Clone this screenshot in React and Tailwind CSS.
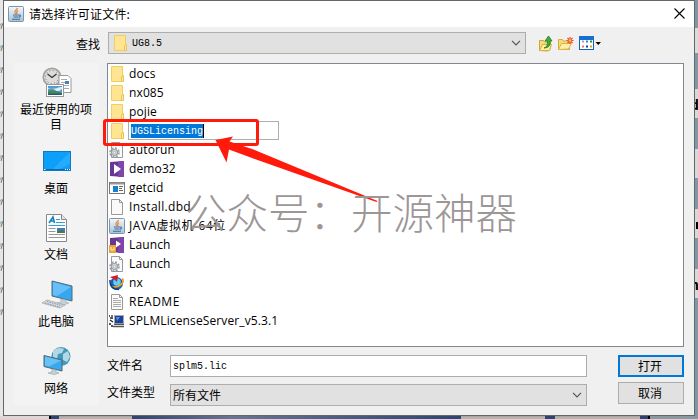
const CJK = "font-['Noto_Sans_CJK_SC','Noto_Sans',sans-serif]";
const MONO = "font-['Liberation_Mono',monospace]";

function Folder() {
  return (
    <svg width="16" height="18" viewBox="0 0 16 18" className="shrink-0">
      <path d="M2.500 1.500h11v9h1v6h-12z" fill="#ffe592" stroke="#f0cf60" />
      <path d="M12.500 16.500v-5l2-1v6z" fill="#ffe9a2" stroke="#eac54f" />
    </svg>
  );
}

function Java() {
  return (
    <svg width="16" height="16" viewBox="0 0 16 16" className="shrink-0">
      <defs>
        <linearGradient id="jv" x1="0" y1="0" x2="0" y2="1">
          <stop offset="0" stopColor="#f4f7fa" />
          <stop offset="1" stopColor="#a9c0d4" />
        </linearGradient>
      </defs>
      <rect x=".5" y=".5" width="15" height="15" rx="1" fill="url(#jv)" stroke="#7897b2" />
      <path d="M9.500 2C9 4 6 4.500 7 6.500L8 8M10 4.500C8 5.500 8.500 6.500 9 8" fill="none" stroke="#e88432" strokeWidth="1.200" />
      <path d="M5 9h6M5.500 11h5M4 13.300h8M11 9q3 0 0 2.500" fill="none" stroke="#416c9a" strokeWidth="1.100" />
    </svg>
  );
}

function Page({ gear, lines }) {
  return (
    <svg width="16" height="18" viewBox="0 0 16 18" className="shrink-0">
      <path d="M2.500 1.500h8l3 3v12h-11z" fill="#fafafa" stroke="#999" />
      <path d="M10.500 1.500v3h3" fill="none" stroke="#999" />
      {lines && <path d="M4 5.500h5M4 7.500h8M4 9.500h8M4 11.500h8M4 13.500h8" stroke="#aaa" />}
      {gear && (
        <g>
          <circle cx="5.500" cy="11.500" r="4.300" fill="none" stroke="#98a0a6" strokeWidth="2" strokeDasharray="1.900 1.470" />
          <circle cx="5.500" cy="11.500" r="3" fill="#dfe3e6" stroke="#98a0a6" strokeWidth="1.200" />
          <circle cx="5.500" cy="11.500" r="1.200" fill="#fff" stroke="#98a0a6" strokeWidth=".8" />
        </g>
      )}
    </svg>
  );
}

function Play({ lock }) {
  return (
    <svg width="16" height="16" viewBox="0 0 16 16" className="shrink-0">
      <path d="M1 1l14-1v16L1 15z" fill="#6b3594" />
      <path d="M9 .5l6-.5v16H9z" fill="#7f46aa" />
      <path d={lock ? "M7 3.500l5 3.500-5 3.500z" : "M5 3l7 5-7 5z"} fill="#fff" />
      {lock && (
        <g>
          <rect x="0" y="8" width="7" height="8" fill="#e9a536" />
          <path d="M2 10v3h3v-3" fill="none" stroke="#fff0c0" />
        </g>
      )}
    </svg>
  );
}

function AppWindow() {
  return (
    <svg width="16" height="14" viewBox="0 0 16 14" className="shrink-0">
      <rect x=".5" y="1.500" width="15" height="11" fill="#fff" stroke="#777" />
      <path d="M1 2.500h14" stroke="#999" strokeWidth="2" />
      <rect x="4" y="5" width="5" height="6" fill="#1582cf" />
      <path d="M10 5.500h4M10 7.500h3M10 9.500h4" stroke="#666" />
    </svg>
  );
}

function Nx() {
  return (
    <svg width="16" height="16" viewBox="0 0 16 16" className="shrink-0">
      <circle cx="7.500" cy="8.500" r="6.500" fill="#1b62b4" />
      <circle cx="8" cy="7" r="3.800" fill="#5ed0f5" />
      <path d="M13 3.500c4 3-2 9-10 8.500" fill="none" stroke="#f0a31c" strokeWidth="1.600" />
      <path d="M1 5c-.5 6 3 9.500 9 9.500" fill="none" stroke="#173c82" strokeWidth="1.500" />
      <path d="M1 2l8-2-1 7-2.500-2.500z" fill="#d51a28" />
    </svg>
  );
}

function Setup() {
  return (
    <svg width="16" height="14" viewBox="0 0 16 14" className="shrink-0">
      <rect x="5.500" y="1.500" width="9" height="8" fill="#1d3f9e" stroke="#aaa" />
      <path d="M7 3h4l-3 4z" fill="#4f93df" />
      <path d="M5 10.500h10M4 12.500h11" stroke="#555" strokeWidth="1.500" />
      <path d="M5 11.500h10" stroke="#ddd" strokeWidth=".8" />
      <path d="M0 2h1M3 1v2M1 4h3M1 6l3 2M0 10h2M2 12h2" stroke="#222" strokeWidth="1.300" />
    </svg>
  );
}

function Recent() {
  return (
    <svg width="30" height="32" viewBox="0 0 30 32">
      <circle cx="10" cy="10" r="8.700" fill="#dcdcda" stroke="#a2a29f" strokeWidth="1.800" />
      <circle cx="10" cy="10" r="6.500" fill="none" stroke="#777" strokeDasharray="1 2.400" />
      <path d="M5.500 7l4.500 3.500 4.500-3.500" fill="none" stroke="#333" strokeWidth="1.200" />
      <path d="M17 8.500h9l3 3v14H17z" fill="#fff" stroke="#999" />
      <path d="M19 12.500h6M19 15.500h4M19 18.500h8M19 21.500h8" stroke="#aaa" />
      <rect x="23" y="14" width="4" height="3" fill="#4384ba" />
      <rect x="4.500" y="17.500" width="17" height="12" fill="#fff" stroke="#999" />
      <rect x="6" y="19" width="14" height="9" fill="#539cce" />
      <path d="M6 22q4-2 7 1t7-1v-2q-3 0-5 1t-9 0z" fill="#d9edf5" />
      <path d="M6 24q6-2 14 2v2H6z" fill="#4d8650" />
      <path d="M6 26.500h14v1.500H6z" fill="#255b80" />
    </svg>
  );
}

function Desktop() {
  return (
    <svg width="30" height="32" viewBox="0 3 30 32">
      <rect x="1.500" y="8.500" width="27" height="19" fill="#0da0fb" stroke="#1279bd" />
      <path d="M28 9v12L16 27H10z" fill="#25abff" />
      <path d="M2 26.500h26" stroke="#0969aa" />
      <path d="M2 26.500h1.500M23 26.500h1M25 26.500h1M27 26.500h1" stroke="#fff" />
    </svg>
  );
}

function Document() {
  return (
    <svg width="30" height="32" viewBox="0 0 30 32">
      <path d="M4.500 2.500h15l5 5v22h-20z" fill="#fdfdfd" stroke="#888" />
      <path d="M19.500 2.500v5h5" fill="#e5e5e5" stroke="#888" />
      <path d="M7 11l4-6 1.500 6M8.500 9h4" fill="none" stroke="#1683bf" strokeWidth="1.600" />
      <path d="M14 7.500h4M14 10.500h9M6.500 13.500h16.500" stroke="#39a0d6" />
      <path d="M6.500 16.500h7M6.500 19.500h7M6.500 22.500h16.500M6.500 25.500h16.500" stroke="#999" />
      <rect x="15" y="16" width="8" height="5" fill="#437eaf" />
      <path d="M15 21v-2l5-1 3 2v1z" fill="#4d7753" />
    </svg>
  );
}

function Computer() {
  return (
    <svg width="32" height="32" viewBox="0 0 32 32">
      <path d="M11 2l20 5v15l-20-5z" fill="#35a6f0" stroke="#52697b" />
      <path d="M12 3l18 5-14 9-4-1z" fill="#65bff8" />
      <path d="M20 20v3l-4 1 7 2 5-2-3-1v-2z" fill="#c6d0d6" stroke="#9eacb4" strokeWidth=".6" />
      <path d="M1 24l5-3 18 5-5 3z" fill="#d5dadd" stroke="#9aa4aa" strokeWidth=".7" />
      <path d="M4 24l15 4M6 22.500l15 4" stroke="#929da5" strokeDasharray="1.500 1" />
    </svg>
  );
}

function Network() {
  return (
    <svg width="30" height="32" viewBox="0 1 30 32">
      <circle cx="19" cy="11.500" r="9.500" fill="#4797b9" />
      <path d="M11 6q5-5 11-2l-2 4-4 1-1 5-4-2zM21 9l5-3 2 6-3 5-4-2z" fill="#b1d8e5" />
      <path d="M2 10.500l18 4.500v11L2 21.500z" fill="#39a9ef" stroke="#4e6473" />
      <path d="M3 11.500l16 4-12 6-4-1z" fill="#69c1f5" />
      <path d="M10 24v3l-4 1 6 1.500 5-1.500-3-1v-2z" fill="#c5d0d5" stroke="#94a2aa" strokeWidth=".6" />
    </svg>
  );
}

function Chevron() {
  return (
    <svg width="10" height="6" viewBox="0 0 10 6">
      <path d="M1 .8l4 4 4-4" fill="none" stroke="#555" strokeWidth="1.200" />
    </svg>
  );
}

function UpFolder() {
  return (
    <svg width="14" height="17" viewBox="0 0 14 17">
      <path d="M.5 15.500v-10h4l1 1.500h6v7l-3 2z" fill="#f5dc7a" stroke="#cda637" />
      <path d="M.5 15.500l3-6h9l-2 6z" fill="#ffefa0" stroke="#d5b044" />
      <path d="M5 13q4-1 3.500-7H6L9.500 1 13 6h-2q1 7-6 7z" fill="#3faf3c" stroke="#1c7a22" strokeWidth=".8" />
    </svg>
  );
}

function NewFolder() {
  return (
    <svg width="16" height="15" viewBox="0 0 16 15">
      <path d="M.5 13.500v-10h4l1 1.500h6v8.500z" fill="#f5dc7a" stroke="#d5ad3c" />
      <path d="M.5 13.500l3-6h10l-3 5.500z" fill="#ffefac" stroke="#dbb54c" />
      <path d="M12 1v7M8.500 4.500h7M9.500 2l5 5M14.500 2l-5 5" stroke="#f04e25" strokeWidth="1.200" />
      <circle cx="12" cy="4.500" r="1.200" fill="#ffc36b" />
    </svg>
  );
}

function ViewMenu() {
  return (
    <svg width="23" height="15" viewBox="0 0 23 15">
      <rect x=".5" y=".5" width="14" height="13" fill="#fff" stroke="#0f62bd" />
      <path d="M0 2h15" stroke="#1570d0" strokeWidth="4" />
      <path d="M3 5.500h2" stroke="#aaa0c8" strokeWidth="2" />
      <path d="M7 5.500h2" stroke="#2683d6" strokeWidth="2" />
      <path d="M11 5.500h2" stroke="#289328" strokeWidth="2" />
      <path d="M3 10.500h2" stroke="#f0775c" strokeWidth="2" />
      <path d="M7 10.500h2" stroke="#17389a" strokeWidth="2" />
      <path d="M11 10.500h2" stroke="#d7a421" strokeWidth="2" />
      <path d="M16.500 6h5.500l-2.750 3z" fill="#000" />
    </svg>
  );
}

const files = [
  ["docs", <Folder />],
  ["nx085", <Folder />],
  ["pojie", <Folder />],
  ["UGSLicensing", <Folder />],
  ["autorun", <Page gear />],
  ["demo32", <Play />],
  ["getcid", <AppWindow />],
  ["Install.dbd", <Page />, "tracking-[0.3px]"],
  ["JAVA虚拟机-64位", <Java />, "tracking-[0.5px]"],
  ["Launch", <Play lock />],
  ["Launch", <Page gear />],
  ["nx", <Nx />],
  ["README", <Page lines />, "tracking-[0.5px]"],
  ["SPLMLicenseServer_v5.3.1", <Setup />],
];

const places = [
  ["最近使用的项目", <Recent />, "h-[80px]"],
  ["桌面", <Desktop />, "h-[67px]"],
  ["文档", <Document />, "h-[68px]"],
  ["此电脑", <Computer />, "h-[67px]"],
  ["网络", <Network />, "h-[60px]"],
];

function Backdrop() {
  return (
    <div className="flex w-[3px] shrink-0 flex-col overflow-hidden bg-[#8098a4]">
      <div className="h-[28px]" />
      <div className="h-[25px] bg-[#d9dcdd]" />
      <div className="h-[36px]" />
      <div className="h-[29px] bg-[#d8d8d8] pt-[7px]">
        <div className="-ml-[5px] text-[14px] leading-[16px] font-bold">d</div>
      </div>
      <div className="h-[31px]" />
      <div className="h-[29px] bg-[#d8d8d8]" />
      <div className="h-[31px]" />
      <div className="h-[29px] bg-[#d8d8d8] pt-[13px]">
        <div className="ml-px h-[7px] bg-black" />
      </div>
      <div className="h-[31px]" />
      <div className="h-[29px] bg-[#d8d8d8] pt-[7px]">
        <div className="-ml-[5px] text-[14px] leading-[16px] font-bold">n</div>
      </div>
      <div className="grow" />
    </div>
  );
}

export default function App() {
  return (
    <div className={`relative flex h-[419px] w-[698px] flex-col overflow-hidden text-[12px] leading-[15px] text-black ${CJK}`}>
      <div className="flex h-[416px]">
        <div className="flex w-[3px] shrink-0 flex-col bg-[#e6e6e6] pt-[20px]">
          {Array.from({ length: 14 }, (_, i) => (
            <svg key={i} width="3" height="22" viewBox="0 0 3 22">
              <path d="M0 4l2-1-1 5z" fill="#72b9e4" />
              <path d="M3 3L1 9" stroke="#a97545" />
            </svg>
          ))}
        </div>
        <div className="flex w-[692px] flex-col border border-[#62676b] bg-[#f0f0f0]">
          <div className="flex h-[26px] shrink-0 items-center bg-white pl-1">
            <Java />
            <span className="mb-[2px] ml-[5px] tracking-[0.2px]">请选择许可证文件:</span>
            <svg className="mr-[9px] mb-px ml-auto" width="11" height="11" viewBox="0 0 11 11">
              <path d="M.5 .5l10 10M10.500 .5l-10 10" stroke="#000" strokeWidth="1.100" />
            </svg>
          </div>
          <div className="flex h-[36px] shrink-0 pt-[5px]">
            <span className="w-[104px] pt-[4px] pl-[72px]">查找</span>
            <div className="flex h-[22px] w-[418px] items-center border border-[#adadad] bg-[#e1e1e1] pr-[4px] pl-[3px]">
              <Folder />
              <span className={`ml-1 grow pt-px text-[10px] ${MONO}`}>UG8.5</span>
              <Chevron />
            </div>
            <div className="ml-[13px] flex h-[22px] items-center gap-[5px]">
              <UpFolder />
              <NewFolder />
              <ViewMenu />
            </div>
          </div>
          <div className="flex grow pl-[10px]">
            <div className="flex h-[342px] w-[85px] shrink-0 flex-col bg-[#f3f3f3] pt-[4px]">
              {places.map(([name, icon, height]) => (
                <div key={name} className={`flex flex-col items-center ${height}`}>
                  {icon}
                  <span className="mt-[2px] mr-px w-[76px] text-center">{name}</span>
                </div>
              ))}
            </div>
            <div className="ml-[8px] flex w-[577px] flex-col">
              <div className="h-[284px] border border-[#828790] bg-white pl-px">
                {files.map(([name, icon, spacing = "tracking-[0.12px]"], i) => (
                  <div key={i} className="flex h-[19px] items-center">
                    <div className="flex w-[17px] justify-start">{icon}</div>
                    {i === 3 ? (
                      <div className="ml-[2px] flex h-[19px] w-[151px] items-center border border-[#adadad] bg-white pl-[2px]">
                        <span className={`h-[14px] border-r border-black bg-[#0078d7] text-[10px] leading-[15px] text-white ${MONO}`}>{name}</span>
                      </div>
                    ) : (
                      <span className={`ml-[3px] font-['Open_Sans','Noto_Sans_CJK_SC',sans-serif] whitespace-nowrap ${spacing}`}>{name}</span>
                    )}
                  </div>
                ))}
              </div>
              <div className="flex pt-[8px]">
                <div className="w-[63px]">
                  <div className="h-[27px] pt-[2px]">文件名</div>
                  <div className="pt-[2px]">文件类型</div>
                </div>
                <div className="w-[417px]">
                  <div className={`flex h-[22px] items-center border border-[#adadad] bg-white pl-[2px] text-[10px] ${MONO}`}>splm5.lic</div>
                  <div className="mt-[7px] flex h-[22px] items-center justify-between border border-[#adadad] bg-[#e1e1e1] pr-[4px] pl-[2px]">
                    <span className="mb-px">所有文件</span>
                    <Chevron />
                  </div>
                </div>
                <div className="ml-auto w-[66px]">
                  <div className="flex h-[22px] items-center justify-center border-2 border-[#0078d7] bg-[#e1e1e1] pr-[2px] pb-[2px]">打开</div>
                  <div className="mt-[5px] flex h-[22px] items-center justify-center border border-[#adadad] bg-[#e1e1e1] pr-[2px] pb-[2px]">取消</div>
                </div>
              </div>
            </div>
          </div>
        </div>
        <Backdrop />
      </div>
      <div className="flex h-[3px] items-stretch bg-[#284674]">
        <div className="w-[49px] bg-[#d8d8d8]" />
        <div className="w-[2px] bg-black" />
        <div className="ml-[8px] w-[73px] border-t border-[#a6a89f] bg-[#b4b4b0]" />
        <div className="w-[329px] bg-linear-to-r from-[#284674] via-[#637795] via-30% to-[#284674]" />
        <div className="w-[84px] border-t border-[#a6a89f] bg-[#b4b4b0]" />
        <div className="ml-[10px] w-[85px] border-t border-[#a6a89f] bg-[#b4b4b0]" />
        <div className="ml-[8px] w-[2px] bg-black" />
        <div className="grow bg-[#849ba6]" />
      </div>
      <div className="absolute top-[119px] left-[103px] h-[27px] w-[156px] rounded-[3px] border-3 border-[#ff1a0c]" />
      <svg className="absolute top-[130px] left-[210px]" width="180" height="80" viewBox="0 0 180 80">
        <path d="M5.500 10L23 6.500l-3 4.500 147.500 60.500-1 1L18 21v11.500z" fill="none" />
        <path d="M5.500 10l17.500-3.500-3.500 5 24 8L167.500 71l-1 1L42 28l-23-8.500-2.500 13z" fill="#ff1a0c" />
      </svg>
      <div className="absolute top-[181px] left-[185px] text-[41.500px] leading-[60px] font-light whitespace-nowrap text-[#9c9696]">公众号：开源神器</div>
    </div>
  );
}
